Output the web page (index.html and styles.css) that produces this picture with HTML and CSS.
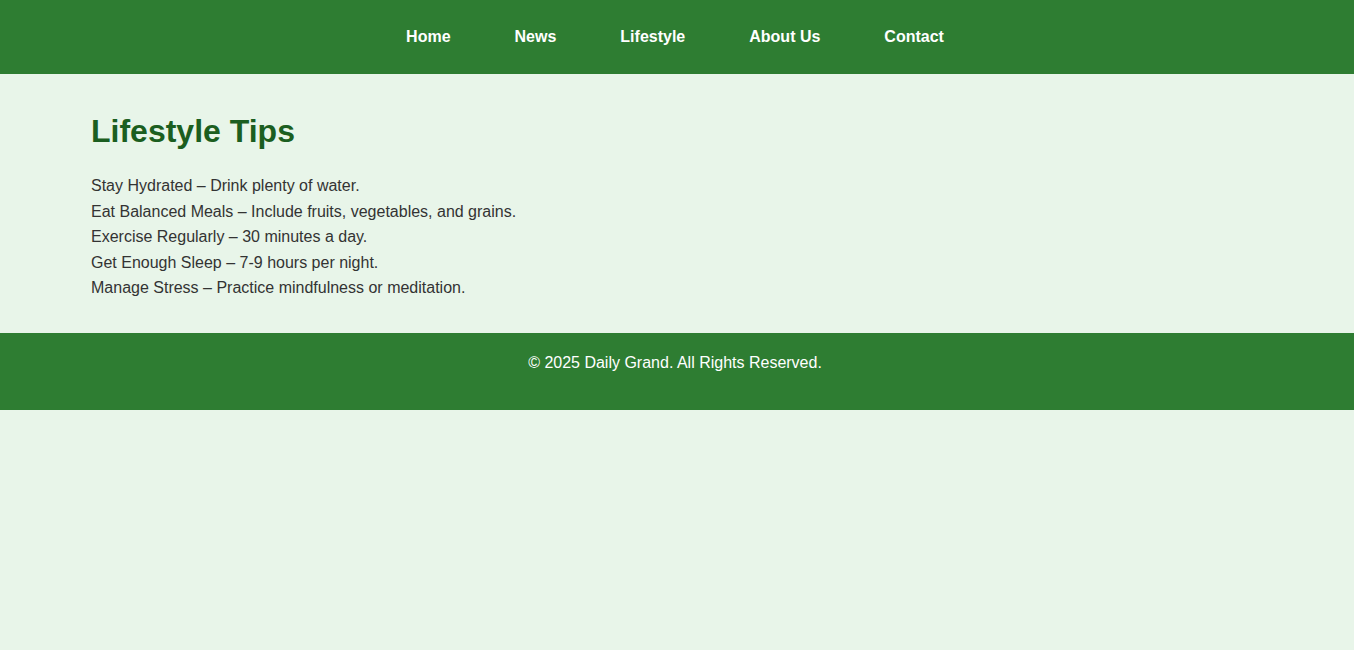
FILE: index.html
```html
<!DOCTYPE html>
<html lang="en">
<head>
<meta charset="utf-8">
<title>Lifestyle Tips - Daily Grand</title>
<link rel="stylesheet" href="styles.css">
</head>
<body>
<header class="site-header">
  <nav class="nav">
    <a class="nav-link" href="#">Home</a>
    <a class="nav-link" href="#">News</a>
    <a class="nav-link" href="#">Lifestyle</a>
    <a class="nav-link" href="#">About Us</a>
    <a class="nav-link" href="#">Contact</a>
  </nav>
</header>
<main class="content">
  <h1 class="title">Lifestyle Tips</h1>
  <ul class="tips">
    <li>Stay Hydrated – Drink plenty of water.</li>
    <li>Eat Balanced Meals – Include fruits, vegetables, and grains.</li>
    <li>Exercise Regularly – 30 minutes a day.</li>
    <li>Get Enough Sleep – 7-9 hours per night.</li>
    <li>Manage Stress – Practice mindfulness or meditation.</li>
  </ul>
</main>
<footer class="site-footer">
  <p class="copy">© 2025 Daily Grand. All Rights Reserved.</p>
</footer>
</body>
</html>
```

FILE: styles.css
```css
html, body {
  margin: 0;
  padding: 0;
}
body {
  background: #e8f5e9;
  font-family: "Liberation Sans", Arial, sans-serif;
  color: #333;
  font-size: 16px;
}
.site-header {
  background: #2e7d32;
  height: 74px;
  display: flex;
  align-items: center;
  justify-content: center;
}
.nav {
  display: flex;
  gap: 64px;
  padding-right: 4px;
}
.nav-link {
  color: #fff;
  font-weight: bold;
  text-decoration: none;
  font-size: 16px;
}
.content {
  padding: 16px 91px 16px;
}
.title {
  color: #1b5e20;
  font-size: 32px;
  margin: 23px 0 23px;
  line-height: 37px;
}
.tips {
  list-style: none;
  padding: 0;
  margin: 0 0 16px;
  line-height: 25.6px;
}
.site-footer {
  background: #2e7d32;
  color: #fff;
  text-align: center;
  height: 77px;
  box-sizing: border-box;
  padding: 17px 4px 0 0;
}
.copy {
  margin: 0;
  line-height: 25.6px;
}
```
